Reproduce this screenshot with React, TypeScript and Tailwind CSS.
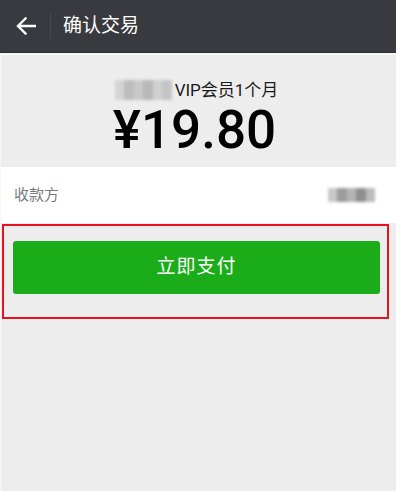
const cjk = "font-['Roboto','Noto_Sans_CJK_SC',sans-serif]";

// pixelated placeholder for masked text
function Mosaic({ cells, className }: { cells: string[]; className?: string }) {
  return (
    <span className={`inline-flex blur-[1.5px] ${className ?? ""}`}>
      {cells.map((c, i) => (
        <span key={i} className={`h-full flex-1 ${c}`} />
      ))}
    </span>
  );
}

function BackArrow() {
  return (
    <svg width="20" height="18" viewBox="0 0 20 18" fill="none">
      <path d="M19 9H2.5M9.5 1.5L2 9l7.5 7.5" stroke="#fff" strokeWidth="2.4" strokeLinecap="square" />
    </svg>
  );
}

export default function App() {
  return (
    <div className={`w-[400px] h-[493px] bg-white ${cjk}`}>
      <div className="w-[396px] h-[491px] bg-[#ededed] border-l border-[#f7f7f7] flex flex-col">
        <header className="h-[53px] bg-[#393a3f] border-b border-[#2c2d31] flex items-center -ml-px">
          <div className="w-[50px] flex justify-center pl-[2px]">
            <BackArrow />
          </div>
          <div className="w-px h-[26px] bg-[#46474c]" />
          <h1 className="ml-[12px] text-[19px] text-white leading-none pb-[2px]">确认交易</h1>
        </header>
        <div className="h-[2px] bg-[#f5f5f5]" />

        <section className="flex flex-col items-center pt-[25px] pb-[10px]">
          <div className="flex items-center h-[20px] pr-[4px]">
            <Mosaic
              className="w-[57px] h-[20px] mr-[3px]"
              cells={["bg-[#d4d4d4]", "bg-[#bdbdbd]", "bg-[#c9c9c9]", "bg-[#b8b8b8]", "bg-[#d0d0d0]", "bg-[#c4c4c4]"]}
            />
            <span className="text-[17px] leading-[20px] text-[#1a1a1a]">VIP会员1个月</span>
          </div>
          <div className="mt-[4px] text-[53px] leading-[53px] font-medium text-black font-['Roboto',sans-serif] pr-[8px]">
            ¥19.80
          </div>
        </section>

        <div className="h-[56px] bg-white flex items-center justify-between pl-[13px] pr-[21px]">
          <span className="text-[15px] text-[#7b7b7b]">收款方</span>
          <Mosaic
            className="w-[47px] h-[14px]"
            cells={["bg-[#c8c8c8]", "bg-[#9c9c9c]", "bg-[#b4b4b4]", "bg-[#8f8f8f]", "bg-[#bcbcbc]"]}
          />
        </div>

        <div className="mt-px ml-px w-[387px] border-2 border-[#e8131d] pt-[15px] pb-[23px] pl-[9px] pr-[7px]">
          <button className="w-full h-[53px] rounded-[3px] bg-[#1aad19] text-white text-[19px] tracking-[1px]">
            立即支付
          </button>
        </div>
      </div>
    </div>
  );
}
